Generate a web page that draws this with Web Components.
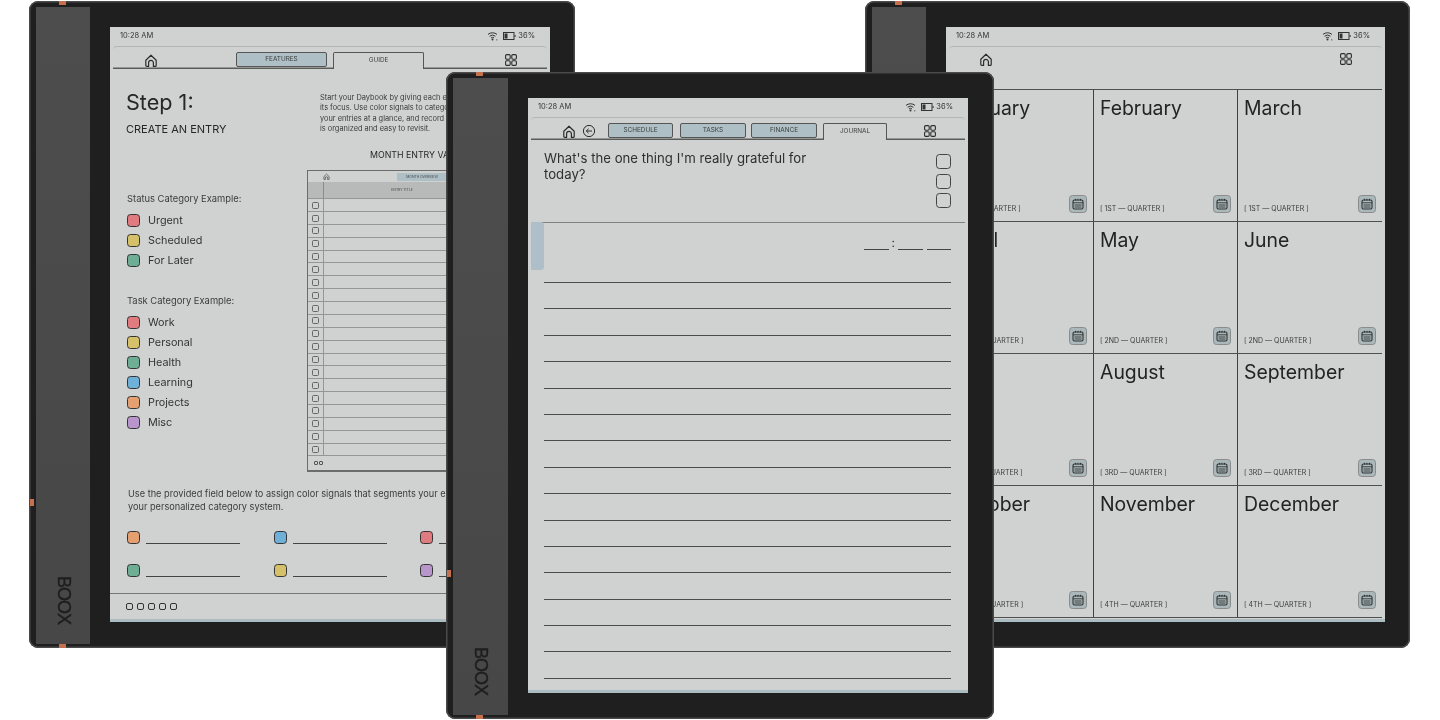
<!DOCTYPE html>
<html>
<head>
<meta charset="utf-8">
<title>Daybook</title>
<style>
  html, body { margin: 0; height: 100%; background: #fff; overflow: hidden; font-family: Inter, "Liberation Sans", sans-serif; color: #262827; }
  .stage { position: relative; width: 1440px; height: 720px; overflow: hidden; }
  #left { position: absolute; left: 29px; top: 1px; }
  #right { position: absolute; left: 865px; top: 1px; width: 545px; --screen-width: 439px; }
  #center { position: absolute; left: 446px; top: 72px; width: 548px; --spine-width: 55px; --screen-right: 26px; }
</style>
</head>
<body>
<div class="stage">
  <boox-device id="left">
    <device-nav>
      <ui-icon name="home" style="margin-left:31px"></ui-icon>
      <nav-tab style="margin-left:78px;width:91px">FEATURES</nav-tab>
      <nav-tab active style="margin-left:6px;width:91px">GUIDE</nav-tab>
      <ui-icon name="apps" style="margin-left:80px"></ui-icon>
    </device-nav>
    <guide-page></guide-page>
  </boox-device>

  <boox-device id="right">
    <device-nav plain>
      <ui-icon name="home" style="margin-left:30px"></ui-icon>
      <ui-icon name="apps" style="margin-left:auto;margin-right:29px"></ui-icon>
    </device-nav>
    <months-page></months-page>
  </boox-device>

  <boox-device id="center">
    <device-nav>
      <ui-icon name="home" style="margin-left:31px"></ui-icon>
      <ui-icon name="back" style="margin-left:6px"></ui-icon>
      <nav-tab style="margin-left:12px;width:65px">SCHEDULE</nav-tab>
      <nav-tab style="margin-left:7px;width:66px">TASKS</nav-tab>
      <nav-tab style="margin-left:5px;width:66px">FINANCE</nav-tab>
      <nav-tab active style="margin-left:6px;width:64px">JOURNAL</nav-tab>
      <ui-icon name="apps" style="margin-left:36px"></ui-icon>
    </device-nav>
    <journal-page></journal-page>
  </boox-device>
</div>

<script>
const ICONS = {
  home: '<path d="M1.8 7.2 7 2.2l5.2 5v5.2a1 1 0 0 1-1 1H9.4V9.8a2.4 2.4 0 0 0-4.8 0v3.6H2.8a1 1 0 0 1-1-1z" fill="none" stroke="#2b2d2c" stroke-width="1.2" stroke-linejoin="round"/>',
  back: '<circle cx="7" cy="7" r="5.6" fill="none" stroke="#2b2d2c" stroke-width="1"/><path d="M10 7H4.4M6.6 4.8 4.3 7l2.3 2.2" fill="none" stroke="#2b2d2c" stroke-width="1"/>',
  apps: '<g fill="none" stroke="#2b2d2c" stroke-width="1.1"><rect x="1.6" y="1.6" width="4.6" height="4.6" rx="1.2"/><rect x="7.8" y="1.6" width="4.6" height="4.6" rx="1.2"/><rect x="1.6" y="7.8" width="4.6" height="4.6" rx="1.2"/><rect x="7.8" y="7.8" width="4.6" height="4.6" rx="1.2"/></g>'
};

class UiIcon extends HTMLElement {
  connectedCallback() {
    const shadow = this.shadowRoot || this.attachShadow({mode: 'open'});
    shadow.innerHTML = `
      <style>
        :host { display: block; width: 14px; height: 14px; flex: none; }
        svg { display: block; }
      </style>
      <svg width="14" height="14" viewBox="0 0 14 14">${ICONS[this.getAttribute('name')]}</svg>
    `;
  }
}
customElements.define('ui-icon', UiIcon);

class ColorSwatch extends HTMLElement {
  connectedCallback() {
    const shadow = this.shadowRoot || this.attachShadow({mode: 'open'});
    shadow.innerHTML = `
      <style>
        :host {
          display: block;
          flex: none;
          box-sizing: border-box;
          width: 13px;
          height: 13px;
          border: 1px solid #333;
          border-radius: 3.5px;
          background: ${this.getAttribute('color')};
        }
      </style>
    `;
  }
}
customElements.define('color-swatch', ColorSwatch);

class BooxDevice extends HTMLElement {
  constructor() {
    super();
    this.shadowDOM = this.attachShadow({mode: 'open'});
    this.shadowDOM.innerHTML = `
      <style>
        :host {
          display: flex;
          box-sizing: border-box;
          width: 546px;
          height: 647px;
          background: #1f1f1f;
          border-radius: 9px;
          box-shadow: inset 0 0 0 1.5px #4a4a4a;
          filter: blur(.35px);
        }
        .spine {
          flex: none;
          width: var(--spine-width, 54px);
          margin: 6px 0 4px 7px;
          background: linear-gradient(#4d4d4d, #474747);
          display: flex;
          flex-direction: column;
          justify-content: flex-end;
          align-items: center;
          padding-bottom: 20px;
          box-sizing: border-box;
        }
        .logo {
          writing-mode: vertical-rl;
          font: 400 18px "Liberation Sans", sans-serif;
          letter-spacing: -1px;
          -webkit-text-stroke: .4px #1e1e1e;
          color: #1e1e1e;
        }
        .screen {
          flex: none;
          display: flex;
          flex-direction: column;
          box-sizing: border-box;
          width: var(--screen-width, 440px);
          margin: 26px var(--screen-right, 25px) 26px 20px;
          background: #d0d2d1;
          border-bottom: 3px solid #abbdc2;
          position: relative;
          overflow: hidden;
        }
        .status {
          flex: none;
          height: 19px;
          box-sizing: border-box;
          display: flex;
          align-items: center;
          padding: 0 15px 2px 10px;
          font-size: 7.5px;
          color: #333;
        }
        .status svg { display: block; }
        .wifi { margin-left: auto; }
        .battery { margin: 0 2px 0 4px; }
        .mark { position: absolute; background: #c5704f; }
        .mark.top { left: 30px; top: 0; width: 7px; height: 4px; }
        .mark.bottom { left: 30px; bottom: 0; width: 7px; height: 4px; }
        .mark.side { left: 1px; top: 498px; width: 4px; height: 7px; }
      </style>
      <div class="spine"><span class="logo">BOOX</span></div>
      <div class="screen">
        <div class="status">
          <span>10:28 AM</span>
          <svg class="wifi" width="12" height="10" viewBox="0 0 12 10">
            <g fill="none" stroke="#333" stroke-width="1">
              <path d="M1 3.4a7 7 0 0 1 9 0M2.6 5.2a4.6 4.6 0 0 1 5.8 0M4 6.9a2.4 2.4 0 0 1 3 0"/>
            </g>
            <circle cx="5.5" cy="8.6" r="1" fill="#333"/>
            <circle cx="9.8" cy="8.8" r=".6" fill="#333"/>
          </svg>
          <svg class="battery" width="13" height="8" viewBox="0 0 13 8">
            <rect x=".5" y=".5" width="10.5" height="7" fill="none" stroke="#333"/>
            <rect x="1.5" y="1.5" width="3" height="5" fill="#333"/>
            <rect x="11.6" y="3" width="1" height="2" fill="#333"/>
          </svg>
          <span>36%</span>
        </div>
        <slot></slot>
      </div>
      <span class="mark top"></span>
      <span class="mark side"></span>
      <span class="mark bottom"></span>
    `;
  }
}
customElements.define('boox-device', BooxDevice);

class DeviceNav extends HTMLElement {
  constructor() {
    super();
    const shadow = this.attachShadow({mode: 'open'});
    shadow.innerHTML = `
      <style>
        :host {
          display: flex;
          flex: none;
          align-items: center;
          box-sizing: border-box;
          height: 23px;
          margin: 0 3px;
          padding-top: 3px;
          border-top: 1px solid #b4b6b5;
          border-radius: 4px 4px 0 0;
          box-shadow: inset 0 -1.5px 0 #5a5c5b;
        }
        :host([plain]) { box-shadow: none; height: 43px; align-items: flex-start; padding-top: 5px; }
      </style>
      <slot></slot>
    `;
  }
}
customElements.define('device-nav', DeviceNav);

class NavTab extends HTMLElement {
  constructor() {
    super();
    const shadow = this.attachShadow({mode: 'open'});
    shadow.innerHTML = `
      <style>
        :host {
          display: flex;
          flex: none;
          align-items: center;
          align-self: flex-end;
          justify-content: center;
          box-sizing: border-box;
          height: 14.5px;
          margin-bottom: 2.5px;
          background: #aebfc6;
          border: 1px solid #555;
          border-radius: 2px;
          font-size: 6.4px;
          color: #3c3e3d;
        }
        :host([active]) {
          height: 17px;
          margin-bottom: 0;
          padding-bottom: 3px;
          background: #d0d2d1;
          border-bottom: 0;
          border-radius: 2px 2px 0 0;
        }
      </style>
      <slot></slot>
    `;
  }
}
customElements.define('nav-tab', NavTab);

class MiniTable extends HTMLElement {
  constructor() {
    super();
    const shadow = this.attachShadow({mode: 'open'});
    shadow.innerHTML = `
      <style>
        :host {
          display: block;
          box-sizing: border-box;
          width: 226px;
          height: 302px;
          border: 1px solid #6b6d6c;
          border-width: 1.5px 1px 2px 1px;
        }
        .top { height: 11px; display: flex; align-items: center; padding-left: 15px; }
        .top svg { display: block; }
        .pill {
          margin-left: 67px;
          width: 50px;
          height: 8px;
          background: #aebfc6;
          font-size: 3.4px;
          line-height: 8px;
          text-align: center;
          white-space: nowrap;
          color: #444;
        }
        .head {
          height: 16px;
          display: grid;
          grid-template-columns: 15px 1fr;
          background: #b8bab9;
          font-size: 3.4px;
          line-height: 16px;
          text-align: center;
          color: #444;
        }
        .head span { border-left: 1px solid #8a8c8b; padding-right: 52px; }
        .row {
          box-sizing: border-box;
          height: 12.87px;
          display: grid;
          grid-template-columns: 15px 1fr;
          border-top: 1px solid #959796;
        }
        .row i {
          display: block;
          box-sizing: border-box;
          width: 7px;
          height: 7px;
          margin: 2.5px 0 0 3.5px;
          border: 1px solid #666;
          border-radius: 1.5px;
        }
        .row b { border-left: 1px solid #959796; }
        .foot { border-top: 1px solid #959796; padding: 5px 0 0 6px; display: flex; gap: 1.5px; }
        .foot i { box-sizing: border-box; width: 3.5px; height: 3.5px; border: .7px solid #555; border-radius: 1px; }
      </style>
      <div class="top">
        <svg width="7" height="7" viewBox="0 0 14 14">${ICONS.home}</svg>
        <div class="pill">MONTH OVERVIEW</div>
      </div>
      <div class="head"><i></i><span>ENTRY TITLE</span></div>
      ${'<div class="row"><i></i><b></b></div>'.repeat(20)}
      <div class="foot"><i></i><i></i></div>
    `;
  }
}
customElements.define('mini-table', MiniTable);

const COLORS = {
  red: '#e07c80', yellow: '#d5c169', green: '#6fae94',
  blue: '#6fb0d8', orange: '#e5a072', purple: '#b896cc'
};

class GuidePage extends HTMLElement {
  constructor() {
    super();
    const legend = (items) => items.map(([color, label]) =>
      `<div class="legend"><color-swatch color="${COLORS[color]}"></color-swatch><span>${label}</span></div>`).join('');
    const field = (color) =>
      `<div class="field"><color-swatch color="${COLORS[color]}"></color-swatch><span class="blank"></span></div>`;
    const shadow = this.attachShadow({mode: 'open'});
    shadow.innerHTML = `
      <style>
        :host { display: flex; flex-direction: column; flex: 1; min-height: 0; }
        .top { display: grid; grid-template-columns: 197px 1fr; }
        .side { padding: 20px 0 0 16px; }
        h1 { margin: 0; font-size: 21.6px; line-height: 26px; font-weight: 400; }
        h2 { margin: 7px 0 0; font-size: 11px; line-height: 14px; font-weight: 400; }
        h3 { margin: 0; padding-left: 1px; font-size: 9.4px; line-height: 12px; font-weight: 400; color: #3a3c3b; }
        .status { margin-top: 57px; }
        .task { margin-top: 25px; }
        .list { margin-top: 5px; padding-left: 1px; }
        .legend { display: flex; align-items: center; gap: 8px; height: 20px; font-size: 10.8px; color: #333; }
        .main { padding-top: 24px; }
        .intro { padding-left: 13px; font-size: 7.4px; line-height: 10.3px; white-space: nowrap; color: #3a3c3b; }
        .title { margin: 15px 0 9px; padding-left: 63px; font-size: 8.8px; line-height: 12px; white-space: nowrap; }
        .note { margin: 15px 0 0; padding-left: 18px; font-size: 9.2px; line-height: 13px; white-space: nowrap; color: #3a3c3b; }
        .fields {
          display: grid;
          grid-template-columns: repeat(3, 146.5px);
          grid-auto-rows: 33px;
          align-items: center;
          margin-top: 8px;
          padding-left: 17px;
        }
        .field { display: flex; align-items: flex-end; gap: 6px; }
        .blank { width: 94px; border-bottom: 1px solid #444; }
        .pager {
          margin-top: auto;
          box-sizing: border-box;
          height: 26px;
          display: flex;
          align-items: center;
          gap: 4px;
          padding: 0 0 1px 16px;
          border-top: 1.5px solid #777;
        }
        .pager i { box-sizing: border-box; width: 7px; height: 7px; border: 1.3px solid #333; border-radius: 2px; }
      </style>
      <div class="top">
        <div class="side">
          <h1>Step 1:</h1>
          <h2>CREATE AN ENTRY</h2>
          <h3 class="status">Status Category Example:</h3>
          <div class="list">${legend([['red', 'Urgent'], ['yellow', 'Scheduled'], ['green', 'For Later']])}</div>
          <h3 class="task">Task Category Example:</h3>
          <div class="list">${legend([['red', 'Work'], ['yellow', 'Personal'], ['green', 'Health'], ['blue', 'Learning'], ['orange', 'Projects'], ['purple', 'Misc']])}</div>
        </div>
        <div class="main">
          <div class="intro">Start your Daybook by giving each entry<br>its focus. Use color signals to categorize<br>your entries at a glance, and record them<br>is organized and easy to revisit.</div>
          <div class="title">MONTH ENTRY VALUES</div>
          <mini-table></mini-table>
        </div>
      </div>
      <p class="note">Use the provided field below to assign color signals that segments your entries into<br>your personalized category system.</p>
      <div class="fields">
        ${['orange', 'blue', 'red', 'green', 'yellow', 'purple'].map(field).join('')}
      </div>
      <div class="pager"><i></i><i></i><i></i><i></i><i></i></div>
    `;
  }
}
customElements.define('guide-page', GuidePage);

class JournalPage extends HTMLElement {
  constructor() {
    super();
    const shadow = this.attachShadow({mode: 'open'});
    shadow.innerHTML = `
      <style>
        :host { display: flex; flex-direction: column; flex: 1; position: relative; }
        .question {
          height: 83px;
          box-sizing: border-box;
          display: flex;
          justify-content: space-between;
          margin: 0 3px;
          padding: 10px 14px 0 13px;
          border-bottom: 1.5px solid #808281;
        }
        .question p { margin: 0; width: 270px; font-size: 13.2px; line-height: 16px; color: #2e302f; }
        .boxes { display: flex; flex-direction: column; gap: 4.5px; padding-top: 4px; }
        .boxes i { box-sizing: border-box; display: block; width: 15px; height: 15px; border: 1px solid #444; border-radius: 3.5px; }
        .marker { position: absolute; left: 3px; top: 82px; width: 13px; height: 48px; background: #aebfc9; border-radius: 0 3px 3px 0; }
        .writing { padding: 0 17px 0 16px; }
        .clock {
          display: flex;
          justify-content: flex-end;
          align-items: flex-end;
          height: 27px;
          gap: 4px;
          font-size: 12px;
          line-height: 12px;
        }
        .clock i { display: block; width: 25px; border-bottom: 1.3px solid #444; }
        .clock i:last-child { width: 24px; }
        .clock span { margin: 0 -1px 1px; }
        .rule { height: 26.4px; box-sizing: border-box; border-bottom: 1px solid #4a4c4b; }
        .rule.first { height: 33px; }
      </style>
      <div class="question">
        <p>What's the one thing I'm really grateful for today?</p>
        <div class="boxes"><i></i><i></i><i></i></div>
      </div>
      <div class="marker"></div>
      <div class="writing">
        <div class="clock"><i></i><span>:</span><i></i><i></i></div>
        <div class="rule first"></div>
        ${'<div class="rule"></div>'.repeat(15)}
      </div>
    `;
  }
}
customElements.define('journal-page', JournalPage);

class MonthCell extends HTMLElement {
  constructor() {
    super();
    const shadow = this.attachShadow({mode: 'open'});
    shadow.innerHTML = `
      <style>
        :host {
          display: flex;
          flex-direction: column;
          justify-content: space-between;
          box-sizing: border-box;
          padding: 6px 6px 8px 6px;
          border-top: 1px solid #4f5150;
          border-right: 1px solid #3f4140;
        }
        :host(:nth-child(3n)) { border-right: 0; }
        .name { font-size: 19.4px; line-height: 24px; color: #222423; }
        .foot { display: flex; justify-content: space-between; align-items: flex-end; }
        .quarter { font-size: 7px; line-height: 9px; color: #3a3c3b; white-space: nowrap; }
        .cal {
          box-sizing: border-box;
          width: 18px;
          height: 18px;
          border: 1px solid #8a8c8b;
          border-radius: 3.5px;
          background: #aab8bb;
          display: flex;
          align-items: center;
          justify-content: center;
        }
        svg { display: block; }
      </style>
      <div class="name"><slot></slot></div>
      <div class="foot">
        <span class="quarter"></span>
        <span class="cal">
          <svg width="12" height="12" viewBox="0 0 12 12" fill="none" stroke="#2f3130" stroke-width="1.1">
            <rect x="1" y="2" width="10" height="9" rx="1.5"/>
            <path d="M3.5 .8v1.8M6 .8v1.8M8.5 .8v1.8M1 4.8h10M2.5 7h7M2.5 9h7" stroke-width=".9"/>
          </svg>
        </span>
      </div>
    `;
  }

  connectedCallback() {
    this.shadowRoot.querySelector('.quarter').textContent = this.getAttribute('quarter');
  }
}
customElements.define('month-cell', MonthCell);

class MonthsPage extends HTMLElement {
  constructor() {
    super();
    const shadow = this.attachShadow({mode: 'open'});
    shadow.innerHTML = `
      <style>
        :host {
          display: grid;
          grid-template-columns: repeat(3, 144px);
          grid-auto-rows: 132px;
          margin-left: 4px;
          border-bottom: 1px solid #4f5150;
          align-self: flex-start;
        }
      </style>
      <slot></slot>
    `;
  }

  connectedCallback() {
    const months = ['January', 'February', 'March', 'April', 'May', 'June', 'July', 'August', 'September', 'October', 'November', 'December'];
    const quarters = ['1ST', '2ND', '3RD', '4TH'];
    months.forEach((month, i) => {
      const cell = document.createElement('month-cell');
      cell.textContent = month;
      cell.setAttribute('quarter', `[ ${quarters[Math.floor(i / 3)]} — QUARTER ]`);
      this.appendChild(cell);
    });
  }
}
customElements.define('months-page', MonthsPage);
</script>
</body>
</html>
